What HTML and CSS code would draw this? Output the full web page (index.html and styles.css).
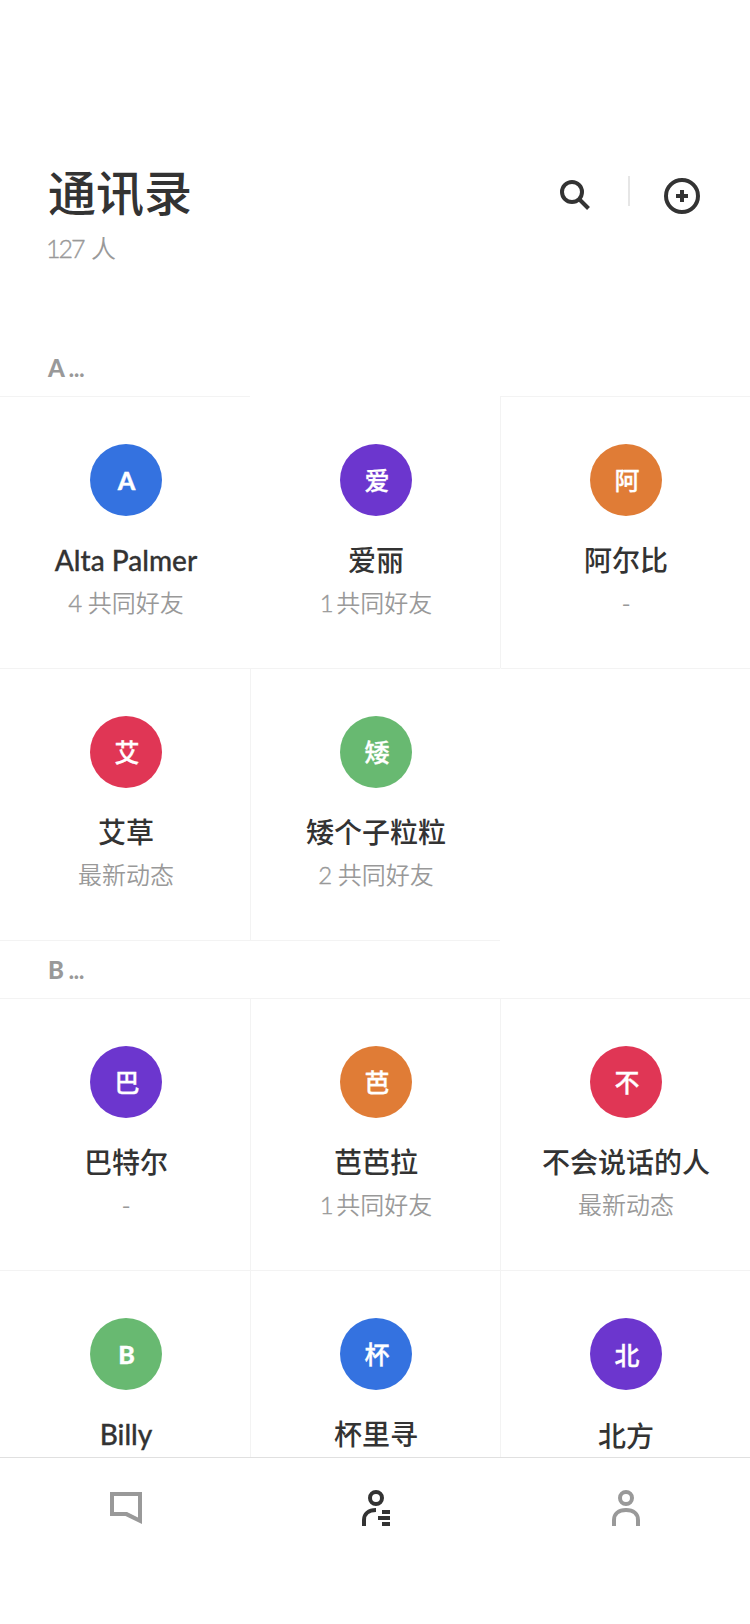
FILE: index.html
```
<!DOCTYPE html>
<html lang="zh-CN">
<head>
  <meta charset="UTF-8" />
  <meta name="viewport" content="width=device-width, initial-scale=1.0" />
  <title>通讯录</title>
  <link rel="stylesheet" href="styles.css">
</head>
<body>
  <header class="header">
    <div class="heading">
      <h1>通讯录</h1>
      <p class="count"><span class="num">127</span> 人</p>
    </div>
    <div class="actions">
      <svg class="icon-search" width="32" height="32" viewBox="0 0 32 32">
        <circle cx="13" cy="13" r="10" />
        <path d="M20 20l9.5 9.5" />
      </svg>
      <span class="divider"></span>
      <svg class="icon-add" width="36" height="36" viewBox="0 0 36 36">
        <circle cx="18" cy="18" r="16" />
        <path d="M12 18h12M18 12v12" />
      </svg>
    </div>
  </header>

  <main class="contacts">
    <h2>A <span class="dots">...</span></h2>
    <div class="grid">
      <div class="contact">
        <div class="avatar blue latin">A</div>
        <div class="name latin">Alta Palmer</div>
        <div class="info"><span class="num">4</span> 共同好友</div>
      </div>
      <div class="contact plain">
        <div class="avatar purple">爱</div>
        <div class="name">爱丽</div>
        <div class="info"><span class="num one">1</span> 共同好友</div>
      </div>
      <div class="contact">
        <div class="avatar orange">阿</div>
        <div class="name">阿尔比</div>
        <div class="info">-</div>
      </div>
      <div class="contact last">
        <div class="avatar red">艾</div>
        <div class="name">艾草</div>
        <div class="info">最新动态</div>
      </div>
      <div class="contact last">
        <div class="avatar green">矮</div>
        <div class="name">矮个子粒粒</div>
        <div class="info"><span class="num">2</span> 共同好友</div>
      </div>
      <div class="contact empty"></div>
    </div>

    <h2 class="second">B <span class="dots">...</span></h2>
    <div class="grid">
      <div class="contact">
        <div class="avatar purple">巴</div>
        <div class="name">巴特尔</div>
        <div class="info">-</div>
      </div>
      <div class="contact">
        <div class="avatar orange">芭</div>
        <div class="name">芭芭拉</div>
        <div class="info"><span class="num one">1</span> 共同好友</div>
      </div>
      <div class="contact">
        <div class="avatar red">不</div>
        <div class="name">不会说话的人</div>
        <div class="info">最新动态</div>
      </div>
      <div class="contact">
        <div class="avatar green latin">B</div>
        <div class="name latin">Billy</div>
      </div>
      <div class="contact">
        <div class="avatar blue">杯</div>
        <div class="name">杯里寻</div>
      </div>
      <div class="contact low">
        <div class="avatar purple">北</div>
        <div class="name">北方</div>
      </div>
    </div>
  </main>

  <nav class="tabbar">
    <a class="tab">
      <svg class="icon-chat" width="36" height="36" viewBox="0 0 36 36">
        <path d="M2 2h32v32l-16.500-8H2zM6 6v16h13l11 5.500V6z" />
      </svg>
    </a>
    <a class="tab active">
      <svg width="36" height="36" viewBox="0 0 36 36">
        <circle cx="18" cy="8" r="6" />
        <path d="M6 36v-6c0-6 4.500-10 12-10M24 22h8M20 28h12M24 34h8" />
      </svg>
    </a>
    <a class="tab">
      <svg width="36" height="36" viewBox="0 0 36 36">
        <circle cx="18" cy="8" r="6" />
        <path d="M6 36v-6c0-6 4.500-10 12-10s12 4 12 10v6" />
      </svg>
    </a>
  </nav>
</body>
</html>
```
FILE: styles.css
```
* {
  box-sizing: border-box;
}
body {
  margin: 0;
  height: 1624px;
  display: flex;
  flex-direction: column;
  overflow: hidden;
  background: #fff;
  color: #333;
  font-family: "Noto Sans CJK SC", sans-serif;
}
h1, h2, p {
  margin: 0;
}
svg {
  display: block;
  fill: none;
  stroke: currentColor;
  stroke-width: 4;
}
.header {
  flex: none;
  height: 340px;
  padding: 154px 50px 0 48px;
  display: flex;
  justify-content: space-between;
}
h1 {
  font-size: 48px;
  font-weight: 500;
  line-height: 72px;
}
.count {
  margin-top: 2px;
  font-family: "Noto Sans CJK SC DemiLight", "Noto Sans CJK SC", sans-serif;
  font-size: 25px;
  line-height: 38px;
  color: #999;
}
.num {
  font-family: Lato, sans-serif;
  font-weight: 300;
  -webkit-text-stroke: 0.4px;
}
.count .num {
  margin: 0 2px 0 -2px;
  letter-spacing: -2px;
}
.num.one {
  letter-spacing: -4px;
}
.info .num.one {
  margin-right: 1px;
}
.actions {
  display: flex;
  align-items: flex-start;
  padding-top: 22px;
}
.icon-search {
  margin: 3px 37px 0 0;
}
.divider {
  width: 2px;
  height: 30px;
  margin-right: 34px;
  background: #e6e6e6;
}
.icon-add {
  margin-top: 2px;
}
.icon-chat {
  fill: currentColor;
  fill-rule: evenodd;
  stroke: none;
}
.contacts {
  flex: 1;
  min-height: 0;
  overflow: hidden;
}
h2 {
  height: 56px;
  padding-left: 48px;
  font-family: Lato, sans-serif;
  font-size: 24px;
  font-weight: 900;
  line-height: 56px;
  color: #999;
}
h2.second {
  height: 58px;
  line-height: 60px;
}
.dots {
  margin-left: -1px;
  font-size: 22px;
}
.grid {
  display: grid;
  grid-template-columns: repeat(3, 250px);
  grid-auto-rows: 272px;
}
.contact {
  display: flex;
  flex-direction: column;
  align-items: center;
  padding: 47px 0 0 1px;
  border-top: 1px solid #f3f3f3;
  border-left: 1px solid #f3f3f3;
}
.contact:nth-child(3n + 1) {
  padding-left: 2px;
  border-left: none;
}
.contact.plain {
  border-color: transparent;
}
.contact.last {
  box-shadow: 0 1px 0 #f3f3f3;
}
.contact.empty {
  border-left-color: transparent;
}
.avatar {
  flex: none;
  width: 72px;
  height: 72px;
  padding-left: 2px;
  border-radius: 50%;
  color: #fff;
  font-size: 25px;
  font-weight: 500;
  line-height: 71px;
  text-align: center;
  -webkit-text-stroke: 0.3px;
}
.avatar.latin {
  padding-left: 1px;
  font-family: Lato, sans-serif;
  font-weight: 900;
  line-height: 72px;
}
.blue {
  background: #3472e0;
}
.purple {
  background: #6c36ce;
}
.orange {
  background: #e07c36;
}
.red {
  background: #e03655;
}
.green {
  background: #68b971;
}
.name {
  margin-top: 23px;
  font-size: 28px;
  font-weight: 500;
  line-height: 40px;
}
.name.latin {
  font-family: Lato, sans-serif;
  line-height: 42px;
  -webkit-text-stroke: 0.3px;
}
.low .avatar {
  line-height: 73px;
}
.low .name {
  margin-top: 25px;
}
.info {
  margin-top: 5px;
  font-family: "Noto Sans CJK SC DemiLight", "Noto Sans CJK SC", sans-serif;
  font-size: 24px;
  line-height: 36px;
  color: #999;
}
.latin + .info {
  margin-top: 3px;
}
.tabbar {
  flex: none;
  height: 167px;
  padding-top: 32px;
  display: grid;
  grid-template-columns: repeat(3, 250px);
  border-top: 1px solid #e0e0e0;
  background: #fff;
}
.tab {
  display: flex;
  justify-content: center;
  padding-left: 2px;
  color: #999;
}
.tab.active {
  color: #333;
}
```
